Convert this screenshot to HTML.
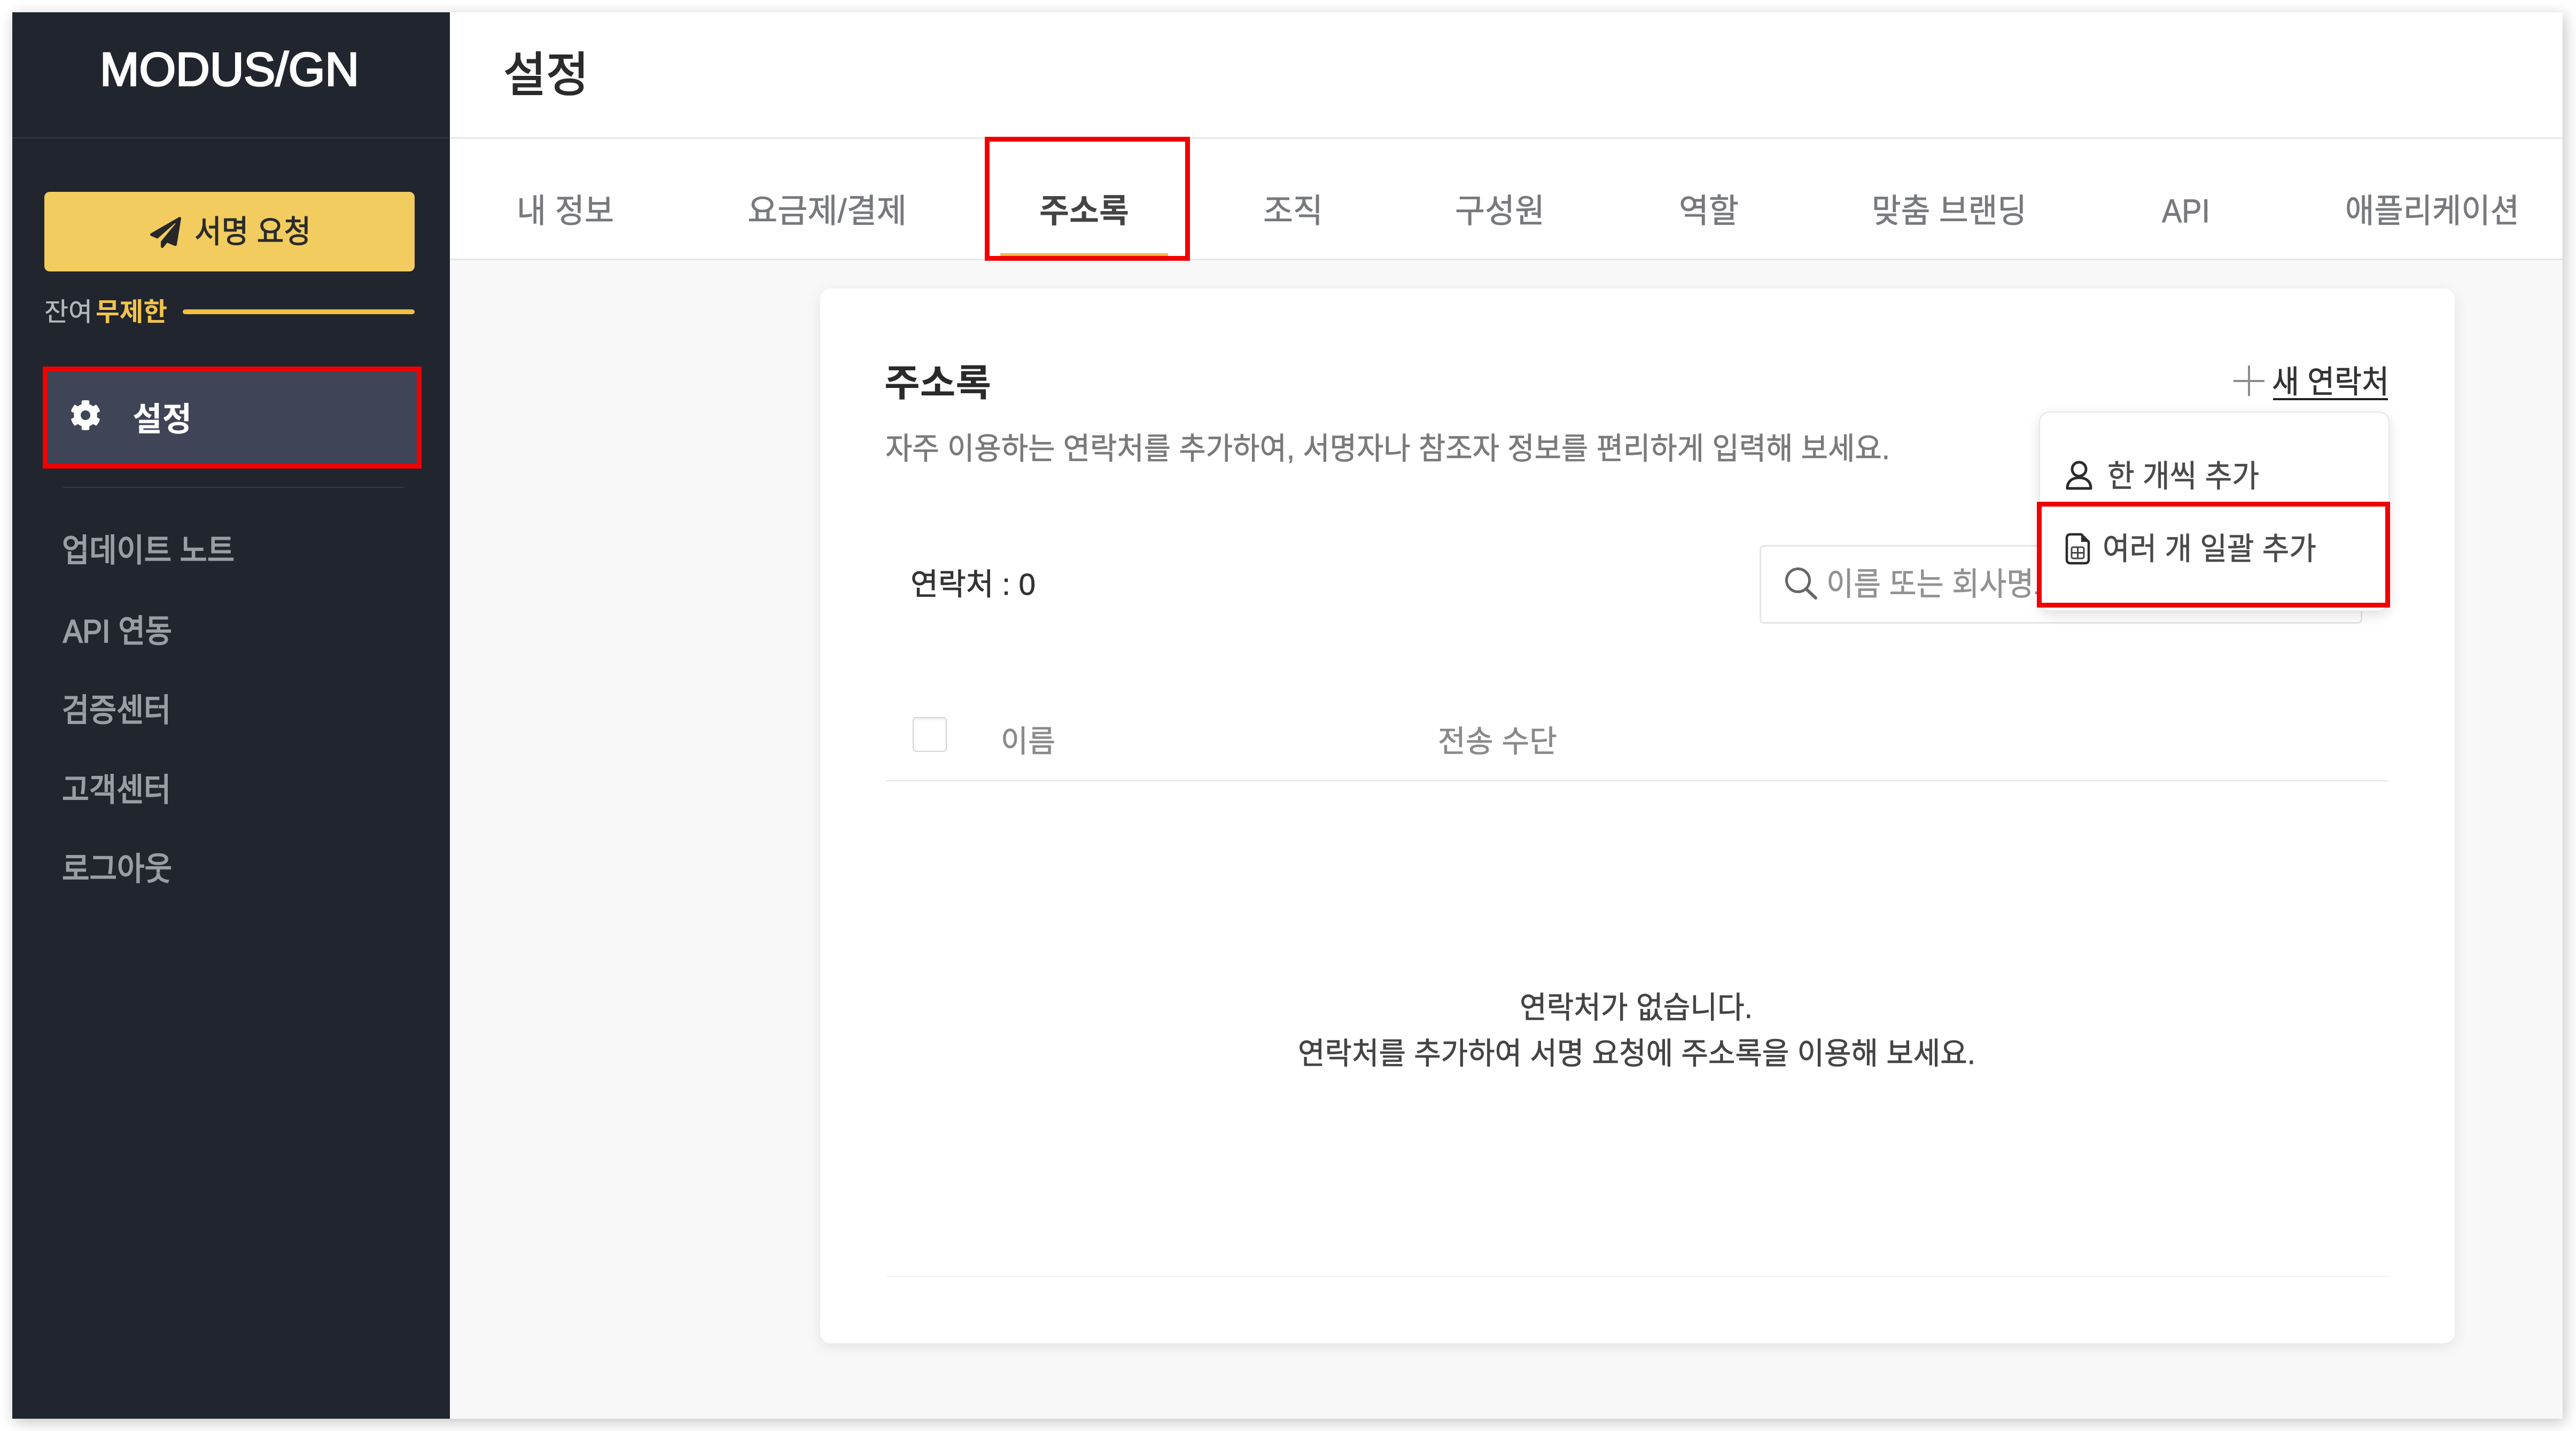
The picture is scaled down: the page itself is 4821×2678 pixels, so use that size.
<!DOCTYPE html>
<html lang="ko"><head><meta charset="utf-8"><title>설정</title>
<style>
html,body{margin:0;padding:0;background:#fff;width:4821px;height:2678px;overflow:hidden}
.a{position:absolute;box-sizing:border-box}
svg{position:absolute;left:0;top:0}
text{font-family:"Liberation Sans","Noto Sans CJK KR",sans-serif;white-space:pre}
</style></head><body>
<div class="a" style="left:23px;top:23px;width:4773px;height:2632px;background:#f8f8f8;box-shadow:4px 6px 26px rgba(0,0,0,.24)"></div>
<div class="a" style="left:842px;top:23px;width:3954px;height:464px;background:#fff;border-bottom:3px solid #e6e6e6"></div>
<div class="a" style="left:842px;top:257px;width:3954px;height:3px;background:#e8e8e8"></div>
<div class="a" style="left:23px;top:23px;width:819px;height:2632px;background:#21252e"></div>
<div class="a" style="left:23px;top:257px;width:819px;height:2px;background:#353944"></div>
<div class="a" style="left:83px;top:359px;width:693px;height:149px;background:#f2cc5f;border-radius:10px"></div>
<div class="a" style="left:342px;top:579px;width:434px;height:9px;background:#f0c042;border-radius:5px"></div>
<div class="a" style="left:80px;top:686px;width:709px;height:191px;background:#3f4457;border:9px solid #f00000"></div>
<div class="a" style="left:118px;top:911px;width:639px;height:2px;background:#353944"></div>
<div class="a" style="left:1535px;top:540px;width:3059px;height:1974px;background:#fff;border-radius:20px;box-shadow:0 6px 28px rgba(0,0,0,.09)"></div>
<div class="a" style="left:1872px;top:474px;width:314px;height:7px;background:#f0b84a"></div>
<div class="a" style="left:1659px;top:1460px;width:2811px;height:2px;background:#e4e4e4"></div>
<div class="a" style="left:1659px;top:2388px;width:2811px;height:2px;background:#efefef"></div>
<div class="a" style="left:1708px;top:1342px;width:64px;height:65px;background:#fff;border:2px solid #d4d4d4;border-radius:7px;box-shadow:inset 0 3px 5px rgba(0,0,0,.06)"></div>
<div class="a" style="left:3293px;top:1020px;width:1128px;height:147px;background:#fff;border:3px solid #e4e4e4;border-radius:8px;overflow:hidden">
<svg width="1128" height="147" style="left:-3px;top:-3px">
<circle cx="72" cy="66" r="21.5" fill="none" stroke="#666" stroke-width="5"/>
<path d="M87 82L105 99" stroke="#666" stroke-width="6" stroke-linecap="round"/>
<text x="125" y="94" font-size="60" fill="#929292" stroke="#929292" stroke-width=".7" textLength="608" lengthAdjust="spacingAndGlyphs">이름 또는 회사명으로 검색</text>
</svg></div>
<div class="a" style="left:3816px;top:770px;width:656px;height:374px;background:#fff;border:2px solid #e8e8e8;border-radius:20px;box-shadow:0 8px 24px rgba(0,0,0,.12)"></div>
<div class="a" style="left:3812px;top:939px;width:661px;height:198px;border:9px solid #f00000"></div>
<div class="a" style="left:1843px;top:256px;width:384px;height:232px;border:9px solid #f00000"></div>
<svg width="4821" height="2678" viewBox="0 0 4821 2678">
<text x="187" y="160" font-size="88" fill="#fff" stroke="#fff" stroke-width="3" textLength="485" lengthAdjust="spacingAndGlyphs">MODUS/GN</text>
<svg x="281" y="406" width="58" height="58" viewBox="0 0 512 512"><path fill="#272727" d="M476 3.2L12.5 270.6c-18.1 10.4-15.8 35.6 2.2 43.2L121 358.4l287.3-253.2c5.5-4.9 13.3 2.6 8.6 8.3L176 407v80.5c0 23.6 28.5 32.9 42.5 15.8L282 426l124.600 52.2c14.2 6 30.4-2.9 33-18.2l72-432C515 7.8 493.3-6.8 476 3.2z"/></svg>
<text x="364" y="454" font-size="59" fill="#2b2b2b" stroke="#2b2b2b" stroke-width="1.2" textLength="218" lengthAdjust="spacingAndGlyphs">서명 요청</text>
<text x="83" y="600" font-size="48" fill="#b4b6bb" stroke="#b4b6bb" stroke-width=".6" textLength="90" lengthAdjust="spacingAndGlyphs">잔여</text>
<text x="179" y="600" font-size="48" font-weight="700" fill="#f2c44e" textLength="134" lengthAdjust="spacingAndGlyphs">무제한</text>
<svg x="131" y="748" width="58" height="58" viewBox="0 0 512 512"><path fill="#fff" d="M487.4 315.7l-42.6-24.6c4.3-23.2 4.3-47 0-70.2l42.6-24.6c4.9-2.8 7.1-8.6 5.5-14-11.1-35.6-30-67.8-54.7-94.6-3.8-4.1-10-5.1-14.8-2.3L380.8 110c-17.9-15.4-38.5-27.3-60.8-35.1V25.8c0-5.6-3.9-10.5-9.4-11.7-36.7-8.2-74.3-7.8-109.2 0-5.5 1.2-9.4 6.1-9.4 11.7V75c-22.2 7.9-42.8 19.8-60.8 35.1L88.7 85.5c-4.9-2.8-11-1.9-14.8 2.3-24.7 26.7-43.6 58.9-54.7 94.6-1.7 5.4.6 11.2 5.5 14L67.3 221c-4.3 23.2-4.3 47 0 70.2l-42.6 24.6c-4.9 2.8-7.1 8.6-5.5 14 11.1 35.6 30 67.8 54.7 94.6 3.8 4.1 10 5.1 14.8 2.3l42.6-24.6c17.9 15.4 38.5 27.3 60.8 35.1v49.2c0 5.6 3.9 10.5 9.4 11.7 36.7 8.2 74.3 7.8 109.2 0 5.5-1.2 9.4-6.1 9.4-11.7v-49.2c22.2-7.9 42.8-19.8 60.8-35.1l42.6 24.6c4.9 2.8 11 1.9 14.8-2.3 24.7-26.7 43.6-58.9 54.7-94.6 1.5-5.5-.7-11.3-5.6-14.1zM256 336c-44.1 0-80-35.9-80-80s35.9-80 80-80 80 35.9 80 80-35.9 80-80 80z"/></svg>
<text x="248" y="806" font-size="62" font-weight="700" fill="#fff" textLength="111" lengthAdjust="spacingAndGlyphs">설정</text>
<g font-size="60" fill="#9a9da3" stroke="#9a9da3" stroke-width="2">
<text x="116" y="1051" textLength="323" lengthAdjust="spacingAndGlyphs">업데이트 노트</text>
<text x="118" y="1202" textLength="204" lengthAdjust="spacingAndGlyphs">API 연동</text>
<text x="116" y="1350" textLength="204" lengthAdjust="spacingAndGlyphs">검증센터</text>
<text x="116" y="1499" textLength="204" lengthAdjust="spacingAndGlyphs">고객센터</text>
<text x="116" y="1647" textLength="206" lengthAdjust="spacingAndGlyphs">로그아웃</text>
</g>
<text x="942" y="171" font-size="89" fill="#2b2b2b" stroke="#2b2b2b" stroke-width="2" textLength="160" lengthAdjust="spacingAndGlyphs">설정</text>
<g font-size="62" fill="#77797d" stroke="#77797d" stroke-width=".8" text-anchor="middle" lengthAdjust="spacingAndGlyphs">
<text x="1058" y="416" textLength="182" lengthAdjust="spacingAndGlyphs">내 정보</text>
<text x="1548" y="416" textLength="298" lengthAdjust="spacingAndGlyphs">요금제/결제</text>
<text x="2420" y="416" textLength="112" lengthAdjust="spacingAndGlyphs">조직</text>
<text x="2807" y="416" textLength="168" lengthAdjust="spacingAndGlyphs">구성원</text>
<text x="3198" y="416" textLength="112" lengthAdjust="spacingAndGlyphs">역할</text>
<text x="3648" y="416" textLength="290" lengthAdjust="spacingAndGlyphs">맞춤 브랜딩</text>
<text x="4091" y="416" textLength="90" lengthAdjust="spacingAndGlyphs">API</text>
<text x="4552" y="416" textLength="326" lengthAdjust="spacingAndGlyphs">애플리케이션</text>
</g>
<text x="2029" y="416" font-size="62" font-weight="700" fill="#444" text-anchor="middle" textLength="168" lengthAdjust="spacingAndGlyphs">주소록</text>
<text x="1655" y="741" font-size="70" font-weight="700" fill="#2a2a2a" textLength="200" lengthAdjust="spacingAndGlyphs">주소록</text>
<text x="1657" y="859" font-size="57" fill="#7a7a7a" stroke="#7a7a7a" stroke-width=".8" textLength="1880" lengthAdjust="spacingAndGlyphs">자주 이용하는 연락처를 추가하여, 서명자나 참조자 정보를 편리하게 입력해 보세요.</text>
<path d="M4180 713H4238M4209 684V741" stroke="#8c8c8c" stroke-width="4" fill="none"/>
<text x="4252" y="735" font-size="59" fill="#333" stroke="#333" stroke-width=".8" textLength="219" lengthAdjust="spacingAndGlyphs">새 연락처</text>
<rect x="4254" y="745" width="215" height="4" fill="#222"/>
<circle cx="3891" cy="878" r="13" fill="none" stroke="#2b2b2b" stroke-width="5"/>
<path d="M3869 914c0-14 10-20 22-20s22 6 22 20z" fill="none" stroke="#2b2b2b" stroke-width="5" stroke-linejoin="round"/>
<text x="3944" y="911" font-size="58" fill="#4a4a4a" stroke="#4a4a4a" stroke-width=".8" textLength="284" lengthAdjust="spacingAndGlyphs">한 개씩 추가</text>
<path d="M3875 1000H3895L3909 1014V1047Q3909 1054 3902 1054H3875Q3868 1054 3868 1047V1007Q3868 1000 3875 1000Z" fill="none" stroke="#2b2b2b" stroke-width="4.500"/>
<path d="M3895 1000V1014H3909Z" fill="#2b2b2b"/>
<rect x="3877" y="1024" width="23" height="21" rx="3" fill="none" stroke="#444" stroke-width="3"/>
<path d="M3888.500 1024V1045M3877 1034.500H3900" stroke="#444" stroke-width="3"/>
<text x="3935" y="1047" font-size="58" fill="#4a4a4a" stroke="#4a4a4a" stroke-width=".8" textLength="400" lengthAdjust="spacingAndGlyphs">여러 개 일괄 추가</text>
<text x="1704" y="1113" font-size="57" fill="#333" stroke="#333" stroke-width=".8" textLength="234" lengthAdjust="spacingAndGlyphs">연락처 : 0</text>
<text x="1873" y="1407" font-size="57" fill="#8a8a8a" stroke="#8a8a8a" stroke-width=".8" textLength="102" lengthAdjust="spacingAndGlyphs">이름</text>
<text x="2691" y="1407" font-size="57" fill="#8a8a8a" stroke="#8a8a8a" stroke-width=".8" textLength="223" lengthAdjust="spacingAndGlyphs">전송 수단</text>
<text x="3062" y="1905" font-size="57" fill="#444" stroke="#444" stroke-width=".8" text-anchor="middle" textLength="436" lengthAdjust="spacingAndGlyphs">연락처가 없습니다.</text>
<text x="3063" y="1991" font-size="57" fill="#444" stroke="#444" stroke-width=".8" text-anchor="middle" textLength="1268" lengthAdjust="spacingAndGlyphs">연락처를 추가하여 서명 요청에 주소록을 이용해 보세요.</text>
</svg>
</body></html>
